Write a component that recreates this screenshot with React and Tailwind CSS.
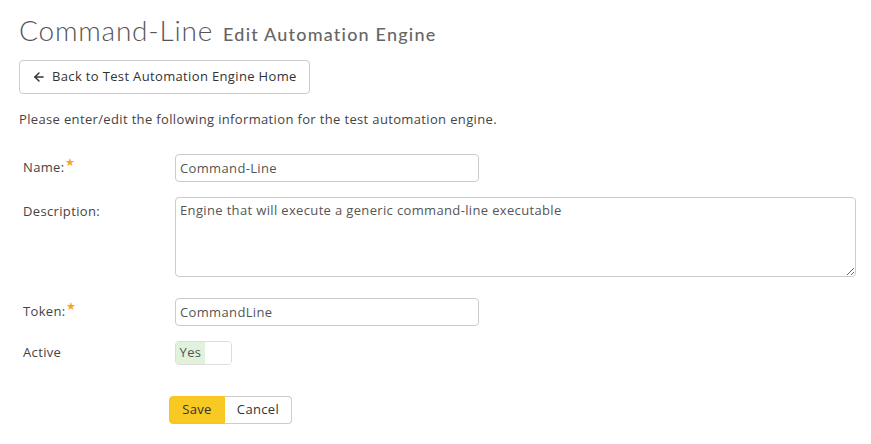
import { ArrowLeft } from 'lucide-react'

function Label({ children, required }) {
  return (
    <div className="w-[156px] pl-1 text-[13px] text-[#444]">
      {children}
      {required && <span className="relative -top-[6px] text-[11px] text-[#f5a623]">★</span>}
    </div>
  )
}

export default function App() {
  return (
    <div className="min-h-[444px] bg-white px-[19px] pt-[9px] font-['Open_Sans','Noto_Sans',sans-serif] tracking-[0.35px] text-[#444]">
      {/* Header */}
      <h1 className="flex items-baseline gap-[10px] font-['Lato',sans-serif]">
        <span className="text-[28px] font-light tracking-[0.8px] text-[#555]">Command-Line</span>
        <span className="text-[18px] font-medium tracking-[1.2px] text-[#666]">Edit Automation Engine</span>
      </h1>

      <button className="mt-[9px] flex h-[34px] w-[291px] items-center gap-[6px] rounded-[4px] border border-[#ccc] bg-white px-[12px] text-[13px] text-[#333]">
        <ArrowLeft className="h-[14px] w-[14px]" strokeWidth={2.5} />
        Back to Test Automation Engine Home
      </button>

      <p className="mt-[16px] text-[13px] text-[#444]">
        Please enter/edit the following information for the test automation engine.
      </p>

      <div className="mt-[24px] flex flex-col">
        <div className="flex items-center">
          <Label required>Name:</Label>
          <input
            defaultValue="Command-Line"
            className="h-[28px] w-[304px] rounded-[4px] border border-[#ccc] px-[4px] text-[13px] text-[#555] outline-none"
          />
        </div>

        <div className="mt-[15px] flex items-start">
          <div className="pt-[5px]">
            <Label>Description:</Label>
          </div>
          <textarea
            defaultValue="Engine that will execute a generic command-line executable"
            className="h-[80px] w-[681px] shrink-0 rounded-[4px] border border-[#ccc] px-[4px] py-[3px] text-[13px] text-[#555] outline-none"
          />
        </div>

        <div className="mt-[21px] flex items-center">
          <Label required>Token:</Label>
          <input
            defaultValue="CommandLine"
            className="h-[28px] w-[304px] rounded-[4px] border border-[#ccc] px-[4px] text-[13px] text-[#555] outline-none"
          />
        </div>

        <div className="mt-[15px] flex items-center">
          <Label>Active</Label>
          <div className="flex h-[24px] w-[57px] overflow-hidden rounded-[4px] border border-[#ddd] text-[13px]">
            <span className="flex w-[29px] items-center justify-center bg-[#e0f2dc] text-[#555]">Yes</span>
            <span className="flex-1 bg-white" />
          </div>
        </div>

        <div className="ml-[150px] mt-[31px] flex">
          <button className="h-[28px] w-[56px] rounded-l-[4px] border border-[#f8c41d] bg-[#f8c823] text-[13px] text-[#333]">
            Save
          </button>
          <button className="h-[28px] w-[67px] rounded-r-[4px] border border-l-0 border-[#ccc] bg-white text-[13px] text-[#333]">
            Cancel
          </button>
        </div>
      </div>
    </div>
  )
}
